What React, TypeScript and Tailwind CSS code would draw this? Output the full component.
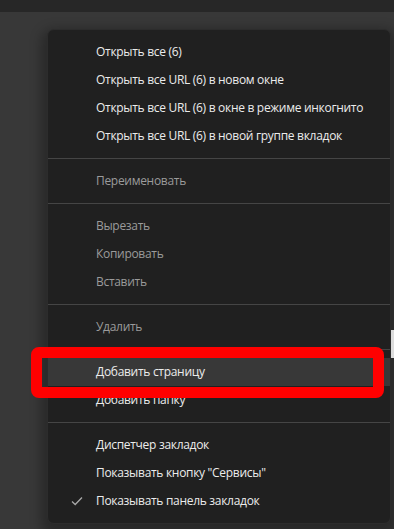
import { Fragment } from "react";

type Item = {
  label: string;
  disabled?: boolean;
  checked?: boolean;
  active?: boolean;
};

const sections: Item[][] = [
  [
    { label: "Открыть все (6)" },
    { label: "Открыть все URL (6) в новом окне" },
    { label: "Открыть все URL (6) в окне в режиме инкогнито" },
    { label: "Открыть все URL (6) в новой группе вкладок" },
  ],
  [{ label: "Переименовать", disabled: true }],
  [
    { label: "Вырезать", disabled: true },
    { label: "Копировать", disabled: true },
    { label: "Вставить", disabled: true },
  ],
  [{ label: "Удалить", disabled: true }],
  [{ label: "Добавить страницу", active: true }, { label: "Добавить папку" }],
  [
    { label: "Диспетчер закладок" },
    { label: 'Показывать кнопку "Сервисы"' },
    { label: "Показывать панель закладок", checked: true },
  ],
];

const CheckIcon = () => (
  <svg width="12" height="10" viewBox="0 0 12 10" fill="none">
    <path d="M1 5.5 L4.2 8.5 L11 1.5" stroke="#a8a8a8" strokeWidth="1.3" />
  </svg>
);

const MenuRow = ({ item }: { item: Item }) => (
  <div
    className={`flex h-[28px] items-center ${item.active ? "bg-[#383838]" : ""} ${item.disabled ? "text-[#9b9b9b]" : "text-[#ececec]"}`}
  >
    <span className="flex w-[48px] justify-end pr-[13px]">
      {item.checked && <CheckIcon />}
    </span>
    <span className="whitespace-nowrap">{item.label}</span>
  </div>
);

const App = () => {
  return (
    <div className="relative flex h-[529px] w-[394px] flex-col overflow-hidden bg-[#383838] font-['Segoe_UI','Open_Sans','Noto_Sans',sans-serif] text-[12px] tracking-[-0.3px]">
      <div className="h-[12px] w-full shrink-0 bg-[#272727]" />

      <div className="absolute right-0 top-[330px] h-[28px] w-[3px] bg-[#dcdcdc]" />

      <div className="ml-[47px] mt-[17px] w-[344px] rounded-[7px] border border-[#2c2c2c] bg-[#202020] py-[8px] shadow-[0_6px_12px_6px_rgba(0,0,0,0.28)]">
        {sections.map((section, i) => (
          <Fragment key={i}>
            {i > 0 && <div className="my-[8px] h-px bg-[#454545]" />}
            {section.map((item) => (
              <MenuRow key={item.label} item={item} />
            ))}
          </Fragment>
        ))}
      </div>

      <div className="absolute left-[31px] top-[347px] h-[51px] w-[353px] rounded-[8px] border-[11px] border-[#ff0000]" />
    </div>
  );
};

export default App;
